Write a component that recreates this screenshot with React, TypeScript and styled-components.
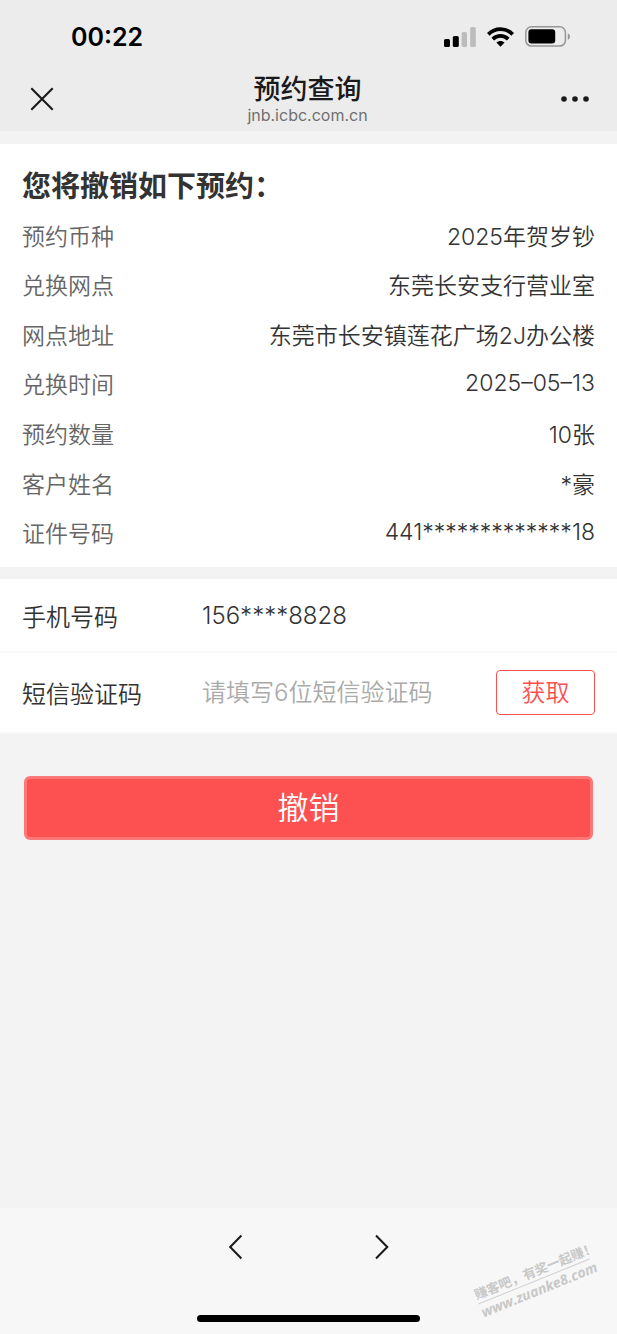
import React, { useState } from 'react';
import styled, { createGlobalStyle } from 'styled-components';

const GlobalStyle = createGlobalStyle`
  * { box-sizing: border-box; }
  body {
    margin: 0;
    background: #f3f3f3;
    color: #333;
    font-family: Inter, "Noto Sans CJK SC", sans-serif;
  }
  button, input { font-family: inherit; }
`;

const Page = styled.div`
  display: flex;
  flex-direction: column;
  min-height: 100vh;
`;

const Header = styled.header`
  background: #ececec;
`;

const StatusBar = styled.div`
  display: flex;
  align-items: center;
  justify-content: space-between;
  height: 73px;
  padding: 0 47px 0 71px;
`;

const Clock = styled.time`
  color: #000;
  font-size: 25px;
  font-weight: 600;
  line-height: 32px;
`;

const StatusIcons = styled.div`
  display: flex;
  align-items: center;
  gap: 11px;
`;

const NavBar = styled.div`
  display: grid;
  grid-template-columns: 60px 1fr 60px;
  align-items: center;
  height: 58px;
  padding: 0 14px 6px 12px;
`;

const IconButton = styled.button`
  display: flex;
  align-items: center;
  justify-content: center;
  width: 60px;
  height: 44px;
  padding: 0;
  border: 0;
  background: none;
`;

const TitleBlock = styled.div`
  display: flex;
  flex-direction: column;
  align-items: center;
`;

const Title = styled.h1`
  margin: 0;
  color: #1a1a1a;
  font-size: 27px;
  font-weight: 500;
  line-height: 32px;
`;

const Domain = styled.span`
  color: #707070;
  font-size: 16px;
  line-height: 18px;
`;

const Main = styled.main`
  display: flex;
  flex: 1;
  flex-direction: column;
  gap: 12px;
  padding: 13px 0 24px;
`;

const Card = styled.section`
  background: #fff;
`;

const SummaryCard = styled(Card)`
  padding: 20px 22px 10px;
`;

const Heading = styled.h2`
  margin: 0;
  font-size: 29px;
  font-weight: 700;
  line-height: 46px;
`;

const Details = styled.dl`
  display: grid;
  grid-auto-rows: 1fr;
  min-height: 347px;
  margin: 0;
  font-size: 23px;
  font-weight: 350;
`;

const DetailRow = styled.div`
  display: flex;
  align-items: center;
  justify-content: space-between;
  gap: 16px;
`;

const Term = styled.dt`
  flex: none;
  color: #666;
`;

const Value = styled.dd`
  margin: 0;
  text-align: right;
`;

const Field = styled.div<{ $height: number }>`
  display: flex;
  align-items: center;
  min-height: ${(p) => p.$height}px;
  padding: 0 22px;
  border-bottom: 2px solid #f8f8f8;
  font-size: 24px;
  font-weight: 350;
`;

const FieldLabel = styled.label`
  flex: none;
  width: 180px;
`;

const FieldInput = styled.input`
  flex: 1;
  min-width: 0;
  height: 44px;
  padding: 0;
  border: 0;
  outline: 0;
  background: none;
  color: #333;
  font-size: 24px;
  font-weight: 350;
  &::placeholder { color: #aaa; opacity: 1; }
`;

const CodeButton = styled.button`
  flex: none;
  width: 99px;
  height: 45px;
  padding: 0;
  border: 1px solid #fd5050;
  border-radius: 4px;
  background: #fff;
  color: #fd5050;
  font-size: 24px;
  font-weight: 350;
  line-height: 42px;
`;

const Actions = styled.div`
  display: flex;
  padding: 30px 24px 0;
`;

const SubmitButton = styled.button`
  flex: 1;
  height: 64px;
  padding: 0;
  border: 3px solid #ff7878;
  border-radius: 6px;
  background: #fd5050;
  color: #fff;
  font-size: 31px;
  font-weight: 350;
  line-height: 56px;
`;

const Footer = styled.footer`
  position: relative;
  display: flex;
  flex-direction: column;
  align-items: center;
  justify-content: space-between;
  height: 126px;
  padding: 17px 0 12px;
  background: #f7f7f7;
`;

const Pager = styled.nav`
  display: flex;
  gap: 86px;
`;

const HomeIndicator = styled.div`
  width: 36%;
  height: 7px;
  border-radius: 4px;
  background: #000;
`;

const Watermark = styled.div`
  position: absolute;
  right: 23px;
  bottom: 34px;
  width: 120px;
  transform: rotate(-22deg);
  color: #c8c8c8;
  font-weight: 700;
  white-space: nowrap;
`;

const WatermarkSlogan = styled.div`
  border-bottom: 1px solid #d0d0d0;
  font-size: 13px;
  line-height: 18px;
`;

const WatermarkSite = styled.div`
  font-family: "Open Sans", sans-serif;
  font-size: 14px;
  font-style: italic;
  line-height: 18px;
  text-align: center;
`;

const SignalIcon = () => (
  <svg width="32" height="20" viewBox="0 0 32 20" aria-hidden="true">
    <rect x="0" y="12" width="6" height="8" rx="1.6" />
    <rect x="8.8" y="9" width="6" height="11" rx="1.6" />
    <rect x="17.6" y="5" width="5.4" height="15" rx="1.6" fill="#bcbcbc" />
    <rect x="26.2" y="0" width="5.6" height="20" rx="1.6" fill="#bcbcbc" />
  </svg>
);

const WifiIcon = () => (
  <svg width="27" height="20" viewBox="0 0 27 20" aria-hidden="true">
    <path d="M1.3 7.3C8.2 .5 18.8 .5 25.7 7.3" fill="none" stroke="#000" strokeWidth="3.8" />
    <path d="M5.8 12.1c4.3-4.3 11.1-4.3 15.4 0" fill="none" stroke="#000" strokeWidth="3.7" />
    <path d="M9.4 15.6c2.3-2.1 5.9-2.1 8.2 0L13.5 19.8z" />
  </svg>
);

const BatteryIcon = () => (
  <svg width="45" height="21" viewBox="0 0 45 21" aria-hidden="true">
    <rect x="0.8" y="0.8" width="39.6" height="19.2" rx="5.6" fill="none" stroke="#969696" strokeWidth="1.5" />
    <rect x="3.4" y="3.2" width="26.8" height="14.2" rx="3" />
    <path d="M42.8 7.2c2.9 1.4 2.9 5.2 0 6.6z" fill="#969696" />
  </svg>
);

const CloseIcon = () => (
  <svg width="24" height="24" viewBox="0 0 24 24" aria-hidden="true">
    <path d="M1.3 1.3l21.4 21.4M22.7 1.3L1.3 22.7" fill="none" stroke="#1a1a1a" strokeWidth="2.1" />
  </svg>
);

const MoreIcon = () => (
  <svg width="32" height="6" viewBox="0 0 32 6" aria-hidden="true" fill="#1a1a1a">
    <circle cx="7" cy="3" r="2.8" />
    <circle cx="18" cy="3" r="2.8" />
    <circle cx="29" cy="3" r="2.8" />
  </svg>
);

const ChevronIcon = ({ direction }: { direction: 'left' | 'right' }) => (
  <svg width="14" height="26" viewBox="0 0 14 26" aria-hidden="true">
    <path
      d={direction === 'left' ? 'M12.4 1.5L1.2 13 12.4 24.5' : 'M1 1.5L12.3 13 1 24.5'}
      fill="none"
      stroke="#1a1a1a"
      strokeWidth="2"
    />
  </svg>
);

const details: [string, string][] = [
  ['预约币种', '2025年贺岁钞'],
  ['兑换网点', '东莞长安支行营业室'],
  ['网点地址', '东莞市长安镇莲花广场2J办公楼'],
  ['兑换时间', '2025–05–13'],
  ['预约数量', '10张'],
  ['客户姓名', '*豪'],
  ['证件号码', '441*************18'],
];

export default function App() {
  const [code, setCode] = useState('');

  return (
    <Page>
      <GlobalStyle />
      <Header>
        <StatusBar>
          <Clock>00:22</Clock>
          <StatusIcons>
            <SignalIcon />
            <WifiIcon />
            <BatteryIcon />
          </StatusIcons>
        </StatusBar>
        <NavBar>
          <IconButton type="button" aria-label="关闭"><CloseIcon /></IconButton>
          <TitleBlock>
            <Title>预约查询</Title>
            <Domain>jnb.icbc.com.cn</Domain>
          </TitleBlock>
          <IconButton type="button" aria-label="更多"><MoreIcon /></IconButton>
        </NavBar>
      </Header>
      <Main>
        <SummaryCard>
          <Heading>您将撤销如下预约：</Heading>
          <Details>
            {details.map(([term, value]) => (
              <DetailRow key={term}>
                <Term>{term}</Term>
                <Value>{value}</Value>
              </DetailRow>
            ))}
          </Details>
        </SummaryCard>
        <Card>
          <Field $height={74}>
            <FieldLabel htmlFor="phone">手机号码</FieldLabel>
            <FieldInput id="phone" value="156****8828" readOnly />
          </Field>
          <Field $height={81}>
            <FieldLabel htmlFor="code">短信验证码</FieldLabel>
            <FieldInput
              id="code"
              inputMode="numeric"
              maxLength={6}
              placeholder="请填写6位短信验证码"
              value={code}
              onChange={(e) => setCode(e.target.value)}
            />
            <CodeButton type="button">获取</CodeButton>
          </Field>
        </Card>
        <Actions>
          <SubmitButton type="button">撤销</SubmitButton>
        </Actions>
      </Main>
      <Footer>
        <Pager aria-label="页面导航">
          <IconButton type="button" aria-label="后退"><ChevronIcon direction="left" /></IconButton>
          <IconButton type="button" aria-label="前进"><ChevronIcon direction="right" /></IconButton>
        </Pager>
        <HomeIndicator />
        <Watermark>
          <WatermarkSlogan>赚客吧，有奖一起赚！</WatermarkSlogan>
          <WatermarkSite>www.zuanke8.com</WatermarkSite>
        </Watermark>
      </Footer>
    </Page>
  );
}
